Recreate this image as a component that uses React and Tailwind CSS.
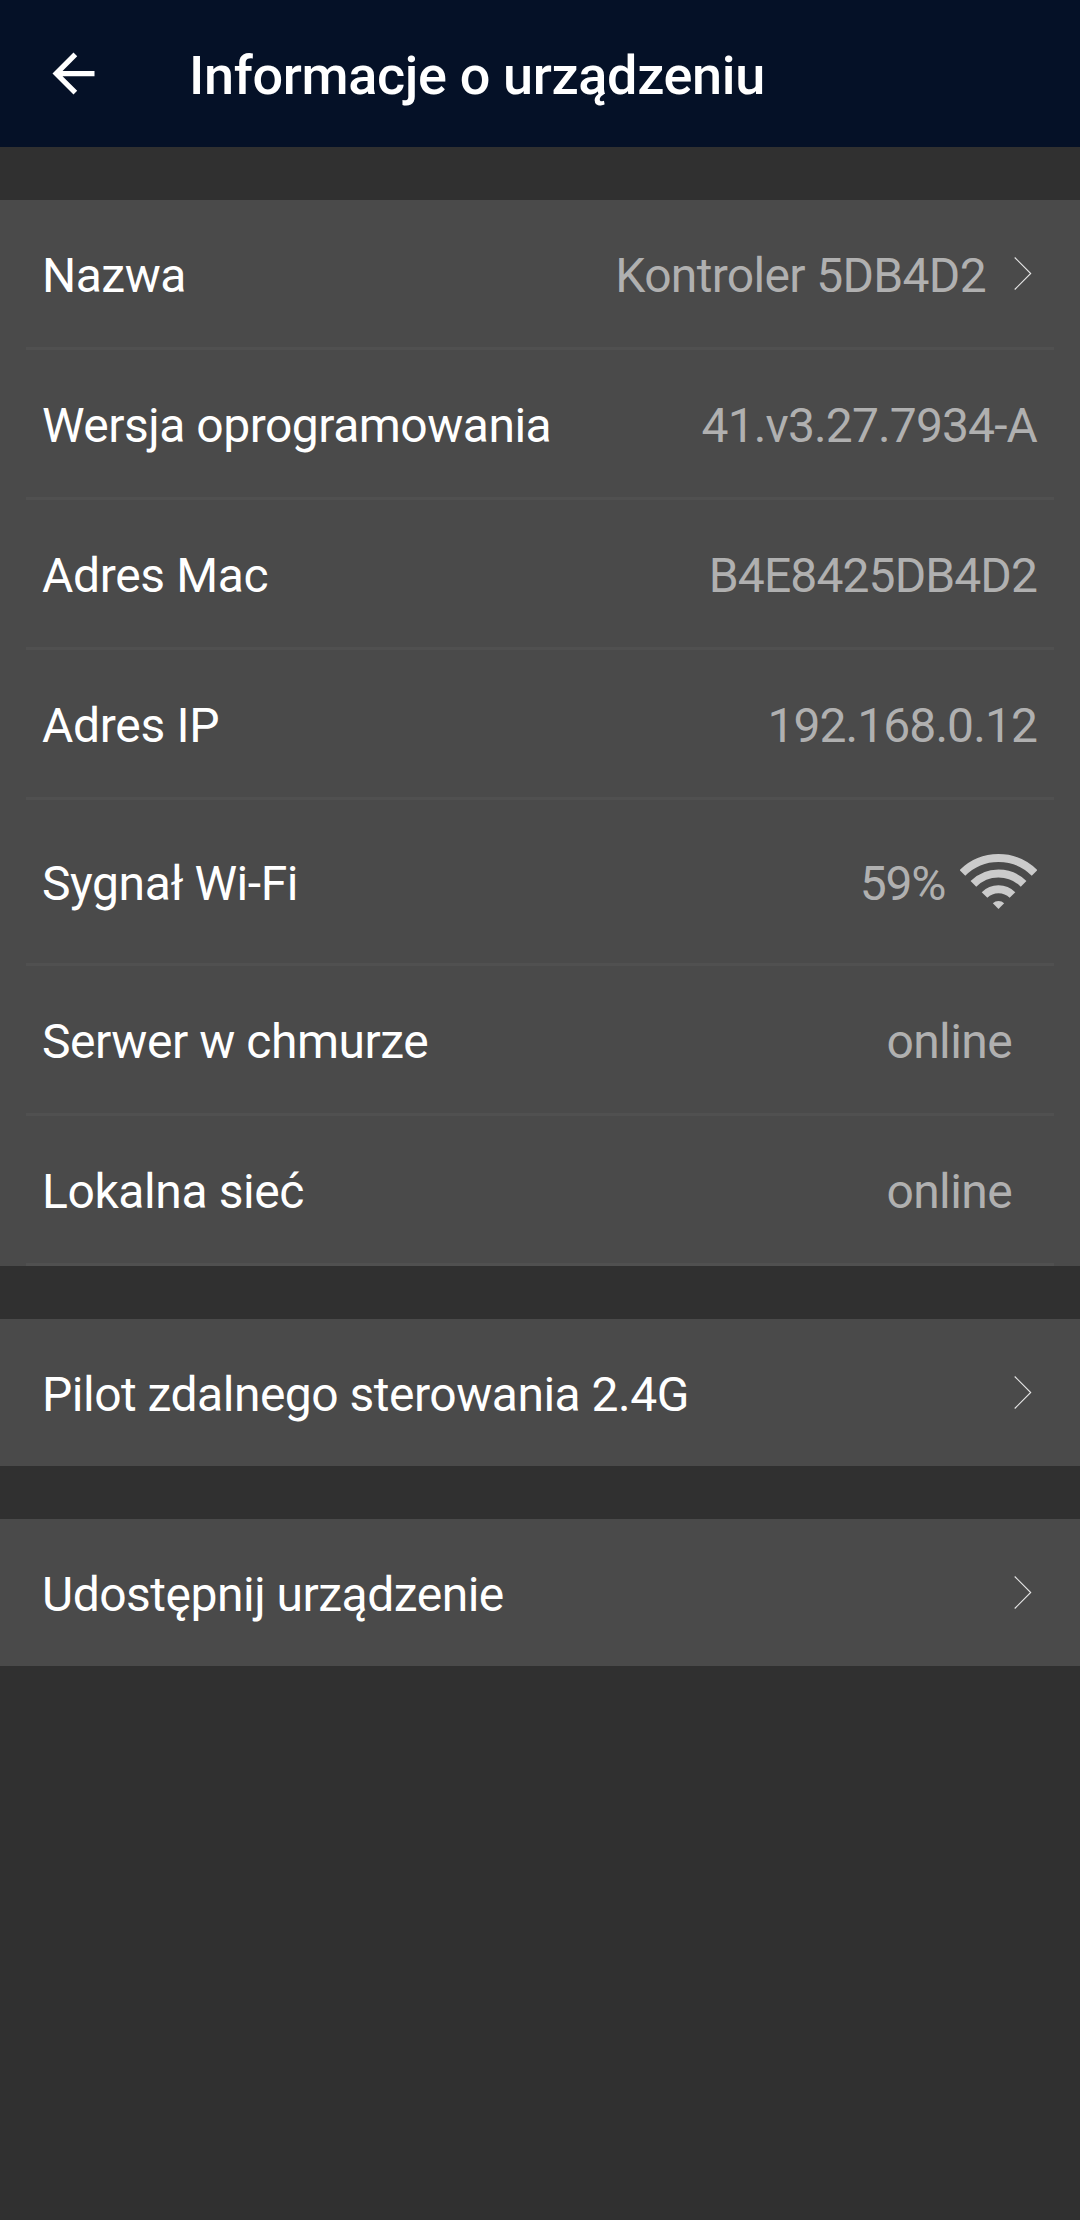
import React from "react";

function Chevron() {
  return (
    <svg className="block h-[33px] w-[18px]" viewBox="0 0 18 33" fill="none" stroke="#e6e6e6" strokeWidth="1.1">
      <path d="M0.7 0.5 L16.7 16.5 L0.7 32.5" />
    </svg>
  );
}

function Wifi() {
  return (
    <svg className="ml-[15px] block h-[55px] w-[77px]" viewBox="0 0 77 55" fill="none" stroke="#cbcbcb" strokeWidth="8">
      <path d="M2.44 18.94 A51 51 0 0 1 74.56 18.94" />
      <path d="M13.4 29.9 A35.5 35.5 0 0 1 63.6 29.9" />
      <path d="M24.53 41.03 A19.75 19.75 0 0 1 52.47 41.03" />
      <path d="M38.5 55 L32.84 49.34 A8 8 0 0 1 44.16 49.34 Z" fill="#cbcbcb" stroke="none" />
    </svg>
  );
}

function Row({ label, value, labelClass = "tracking-[-0.5px]", valueClass = "", className = "h-[147px] pr-[43px]", children }) {
  return (
    <div className={"flex items-center justify-between pl-[42px] text-[48px] leading-[56px] " + className}>
      <span className={"pt-1 text-white " + labelClass}>{label}</span>
      <div className="flex items-center text-[#b0b0b0]">
        {value && <span className={"pt-1 " + valueClass}>{value}</span>}
        {children}
      </div>
    </div>
  );
}

function Divider() {
  return <div className="mx-[26px] h-[3px] bg-[#505050]" />;
}

export default function App() {
  return (
    <main className="h-[2220px] w-[1080px] overflow-hidden bg-[#303030] font-['Roboto',sans-serif]">
      <header className="flex h-[147px] items-center bg-[#051127] pl-[42px] text-white">
        <svg className="block h-[63px] w-[63px]" viewBox="0 0 24 24" fill="#fff">
          <path d="M20 11H7.83l5.59-5.59L12 4l-8 8 8 8 1.41-1.41L7.83 13H20v-2z" />
        </svg>
        <h1 className="ml-[84px] pt-1 text-[54px] font-medium leading-[64px] tracking-[-0.34px]">Informacje o urządzeniu</h1>
      </header>
      <section className="mt-[53px] bg-[#4a4a4a]">
        <Row label="Nazwa" value="Kontroler 5DB4D2" valueClass="tracking-[-0.67px]" className="h-[147px] pr-[48px]">
          <span className="ml-[28px]"><Chevron /></span>
        </Row>
        <Divider />
        <Row label="Wersja oprogramowania" value="41.v3.27.7934-A" valueClass="tracking-[-0.88px]" />
        <Divider />
        <Row label="Adres Mac" labelClass="tracking-[-0.35px]" value="B4E8425DB4D2" valueClass="tracking-[-0.9px]" />
        <Divider />
        <Row label="Adres IP" labelClass="tracking-[-0.3px]" value="192.168.0.12" valueClass="tracking-[-0.93px]" />
        <Divider />
        <Row label="Sygnał Wi-Fi" labelClass="tracking-[-0.42px]" value="59%" valueClass="tracking-[-1.3px]" className="h-[163px] pr-[43px]">
          <Wifi />
        </Row>
        <Divider />
        <Row label="Serwer w chmurze" labelClass="tracking-[-0.45px]" value="online" valueClass="tracking-[-0.6px]" className="h-[147px] pr-[68px]" />
        <Divider />
        <Row label="Lokalna sieć" labelClass="tracking-[-0.4px]" value="online" valueClass="tracking-[-0.6px]" className="h-[147px] pr-[68px]" />
        <Divider />
      </section>
      <section className="mt-[53px] bg-[#4a4a4a]">
        <Row label="Pilot zdalnego sterowania 2.4G" className="h-[147px] pr-[48px]"><Chevron /></Row>
      </section>
      <section className="mt-[53px] bg-[#4a4a4a]">
        <Row label="Udostępnij urządzenie" className="h-[147px] pr-[48px]"><Chevron /></Row>
      </section>
    </main>
  );
}
